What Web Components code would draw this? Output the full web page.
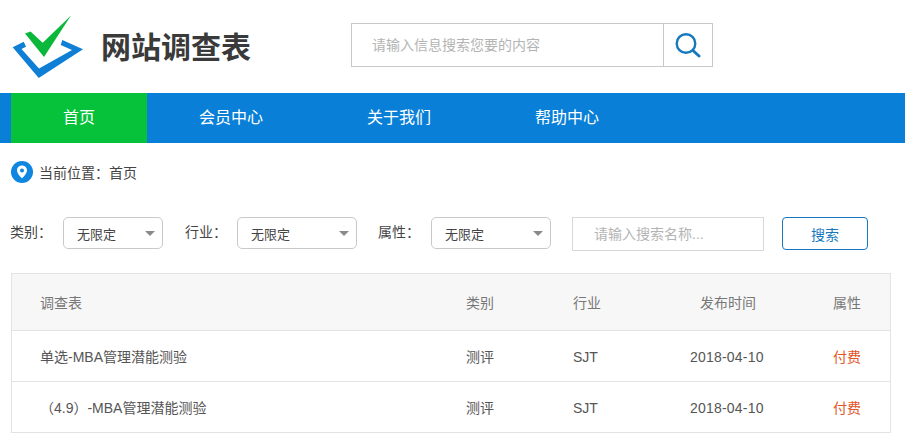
<!DOCTYPE html>
<html lang="zh">
<head>
<meta charset="utf-8">
<title>网站调查表</title>
<style>
    html, body { margin: 0; padding: 0; background: #fff; overflow: hidden; }
    body { font-family: "Liberation Sans", "Noto Sans CJK SC", sans-serif; color: #555; }
</style>
</head>
<body>
<site-header></site-header>
<site-nav>
    <nav-item active>首页</nav-item>
    <nav-item>会员中心</nav-item>
    <nav-item>关于我们</nav-item>
    <nav-item>帮助中心</nav-item>
</site-nav>
<bread-crumb>首页</bread-crumb>
<filter-bar>
    <filter-select label="类别：" style="--label: 53px; --box: 100px; --after: 22px"></filter-select>
    <filter-select label="行业：" style="--label: 52px; --box: 120px; --after: 21px"></filter-select>
    <filter-select label="属性：" style="--label: 53px; --box: 120px; --after: 21px"></filter-select>
</filter-bar>
<survey-table>
    <survey-row name="单选-MBA管理潜能测验" kind="测评" trade="SJT" date="2018-04-10" attr="付费"></survey-row>
    <survey-row name="（4.9）-MBA管理潜能测验" kind="测评" trade="SJT" date="2018-04-10" attr="付费"></survey-row>
</survey-table>

<script>
function mount(el, html) { // Shadow root with the element's markup and styles
    el.attachShadow({ mode: 'open' }).innerHTML = html;
}

class SiteHeader extends HTMLElement {
    constructor() {
        super();
        mount(this, `
<style>
    :host { display: flex; align-items: flex-start; height: 93px; box-sizing: border-box; }
    .logo { display: block; margin: 15px 0 0 12px; flex: none; }
    h1 { margin: 26px 0 0 17px; width: 250px; flex: none; font-size: 30px; line-height: 44px; font-weight: 700; color: #3a3a3a; white-space: nowrap; }
    .search { display: flex; width: 362px; height: 44px; margin-top: 23px; box-sizing: border-box; border: 1px solid #c9c9c9; }
    .text { flex: 1; padding-left: 20px; font-size: 14px; line-height: 42px; color: #b4b4b4; }
    .btn { width: 48px; border-left: 1px solid #c9c9c9; display: flex; align-items: center; justify-content: center; }
</style>
<svg class="logo" width="72" height="64" viewBox="0 0 72 64">
    <path fill="#0f7fd6" d="M0.700 32.300 L11.700 26.800 L14 31.700 L9.500 34 L27 53.500 L60 35 L48.700 30 L50.300 25 L71 34.300 L26.700 63 Z"/>
    <path fill="#0cb83c" d="M13 18.500 L18.500 16.500 L30.700 27.800 L59 0.500 L32 42 Z"/>
</svg>
<h1>网站调查表</h1>
<div class="search">
    <div class="text">请输入信息搜索您要的内容</div>
    <div class="btn">
        <svg width="26" height="26" viewBox="0 0 26 26" fill="none" stroke="#1678bd">
            <circle cx="11" cy="11.500" r="9.300" stroke-width="2.400"/>
            <path d="M18.500 19 L24 24" stroke-width="3" stroke-linecap="round"/>
        </svg>
    </div>
</div>`);
    }
}

class SiteNav extends HTMLElement {
    constructor() {
        super();
        mount(this, `
<style>
    :host { display: flex; height: 50px; padding-left: 11px; background: #0a7fd8; }
</style>
<slot></slot>`);
    }
}

class NavItem extends HTMLElement {
    constructor() {
        super();
        mount(this, `
<style>
    :host { display: block; padding: 0 52px; font-size: 16px; line-height: 50px; color: #fff; }
    :host([active]) { background: #05c23a; }
</style>
<slot></slot>`);
    }
}

class BreadCrumb extends HTMLElement {
    constructor() {
        super();
        mount(this, `
<style>
    :host { display: flex; align-items: center; height: 22px; margin: 18px 0 0 11px; font-size: 14px; color: #444; }
    svg { margin-right: 6px; flex: none; }
</style>
<svg width="22" height="22" viewBox="0 0 22 22">
    <circle cx="11" cy="11" r="11" fill="#0f86e0"/>
    <path fill="#fff" d="M11 4.500 C7.900 4.500 6 6.800 6 9.300 C6 12.300 9 15.300 11 17.500 C13 15.300 16 12.300 16 9.300 C16 6.800 14.100 4.500 11 4.500 Z"/>
    <circle cx="11" cy="9.500" r="2" fill="#0f86e0"/>
</svg>
<span>当前位置：</span><slot></slot>`);
    }
}

class FilterBar extends HTMLElement {
    constructor() {
        super();
        mount(this, `
<style>
    :host { display: flex; align-items: flex-start; margin: 34px 0 0 10px; height: 34px; }
    .name { width: 192px; height: 34px; box-sizing: border-box; border: 1px solid #d8d8d8; padding-left: 21px; font-size: 14px; line-height: 32px; color: #b4b4b4; }
    .go { width: 86px; height: 33px; margin-left: 18px; box-sizing: border-box; border: 1px solid #1678bd; border-radius: 4px; text-align: center; font-size: 14px; line-height: 34px; color: #1678bd; }
</style>
<slot></slot>
<div class="name">请输入搜索名称...</div>
<div class="go">搜索</div>`);
    }
}

class FilterSelect extends HTMLElement {
    constructor() {
        super();
        mount(this, `
<style>
    :host { display: flex; align-items: flex-start; margin-right: var(--after); }
    .label { width: var(--label); font-size: 14px; line-height: 30px; color: #444; white-space: nowrap; }
    .box { display: flex; align-items: center; justify-content: space-between; width: var(--box); height: 32px; box-sizing: border-box; border: 1px solid #c9c9c9; border-radius: 5px; padding: 0 4px 0 13px; font-size: 13px; color: #444; }
    .arrow { width: 0; height: 0; margin-right: 3px; border: 5px solid transparent; border-top: 5px solid #8a8a8a; border-bottom: 0; }
</style>
<span class="label"></span>
<div class="box"><span>无限定</span><i class="arrow"></i></div>`);
        this.shadowRoot.querySelector('.label').textContent = this.getAttribute('label');
    }
}

const COLUMNS = 'grid-template-columns: 426px 107px 127px 133px 1fr;';

class SurveyTable extends HTMLElement {
    constructor() {
        super();
        mount(this, `
<style>
    :host { display: block; width: 880px; margin: 22px 0 0 11px; box-sizing: border-box; border: 1px solid #e3e3e3; border-bottom: 0; }
    .head { display: grid; ${COLUMNS} height: 56px; padding-left: 28px; background: #f7f7f7; border-bottom: 1px solid #e3e3e3; font-size: 14px; line-height: 58px; color: #777; }
</style>
<div class="head">
    <span>调查表</span><span>类别</span><span>行业</span><span>发布时间</span><span>属性</span>
</div>
<slot></slot>`);
    }
}

class SurveyRow extends HTMLElement {
    constructor() {
        super();
        mount(this, `
<style>
    :host { display: grid; ${COLUMNS} height: 50px; padding-left: 28px; border-bottom: 1px solid #e3e3e3; font-size: 14px; line-height: 52px; color: #555; white-space: nowrap; }
    .date { margin-left: -10px; letter-spacing: 0.2px; }
    .attr { color: #e2562a; }
</style>
<span class="title"></span><span class="kind"></span><span class="trade"></span><span class="date"></span><span class="attr"></span>`);
        var root = this.shadowRoot;
        root.querySelector('.title').textContent = this.getAttribute('name');
        root.querySelector('.kind').textContent = this.getAttribute('kind');
        root.querySelector('.trade').textContent = this.getAttribute('trade');
        root.querySelector('.date').textContent = this.getAttribute('date');
        root.querySelector('.attr').textContent = this.getAttribute('attr');
    }
}

customElements.define('site-header', SiteHeader);
customElements.define('site-nav', SiteNav);
customElements.define('nav-item', NavItem);
customElements.define('bread-crumb', BreadCrumb);
customElements.define('filter-bar', FilterBar);
customElements.define('filter-select', FilterSelect);
customElements.define('survey-table', SurveyTable);
customElements.define('survey-row', SurveyRow);
</script>
</body>
</html>
